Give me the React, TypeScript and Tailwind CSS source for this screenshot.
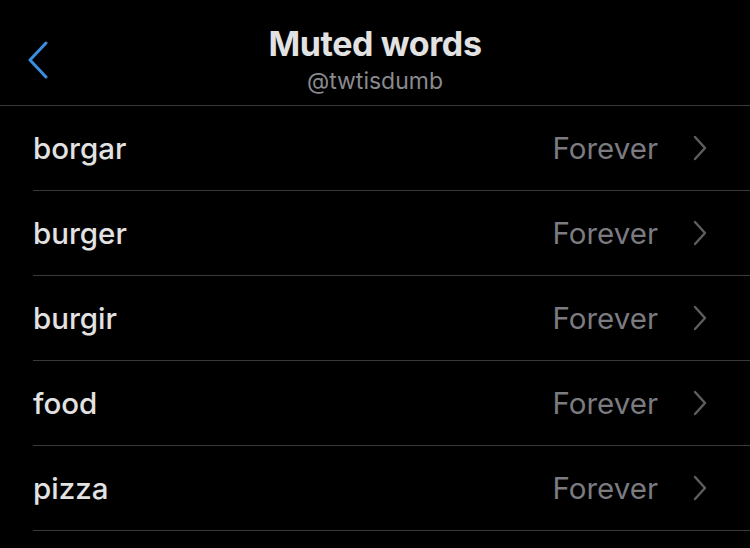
import React from "react";

const words = ["borgar", "burger", "burgir", "food", "pizza"];

function Chevron({ className }: { className?: string }) {
  return (
    <svg width="16" height="28" viewBox="0 0 16 28" className={className} fill="none">
      <path d="M3 3 L13 14 L3 25" stroke="currentColor" strokeWidth="2.4" strokeLinecap="round" strokeLinejoin="round" />
    </svg>
  );
}

export default function App() {
  return (
    <div className="w-[750px] h-[548px] bg-black overflow-hidden" style={{ fontFamily: "Inter, 'Noto Sans', sans-serif" }}>
      <div className="relative h-[106px] border-b border-[#3a3a3c] flex flex-col items-center">
        <svg width="22" height="38" viewBox="0 0 22 38" className="absolute left-[27px] top-[41px] text-[#3b8fe0]" fill="none">
          <path d="M19 2 L3 19 L19 36" stroke="currentColor" strokeWidth="3" strokeLinecap="round" strokeLinejoin="round" />
        </svg>
        <div className="mt-[24px] text-[34px] leading-[40px] font-bold text-[#e2e2e2] tracking-[-0.4px]">Muted words</div>
        <div className="mt-[3px] text-[23px] leading-[28px] text-[#8a8a8e]">@twtisdumb</div>
      </div>
      <div className="pl-[33px]">
        {words.map((w) => (
          <div key={w} className="h-[85px] border-b border-[#3a3a3c] flex items-center pr-[42px] pt-[1px]">
            <div className="flex-1 text-[29.5px] font-medium text-[#e2e2e2]">{w}</div>
            <div className="text-[29.5px] text-[#7b7b80] mr-[34px]">Forever</div>
            <Chevron className="text-[#5e5e62] -mt-[1px]" />
          </div>
        ))}
      </div>
    </div>
  );
}
